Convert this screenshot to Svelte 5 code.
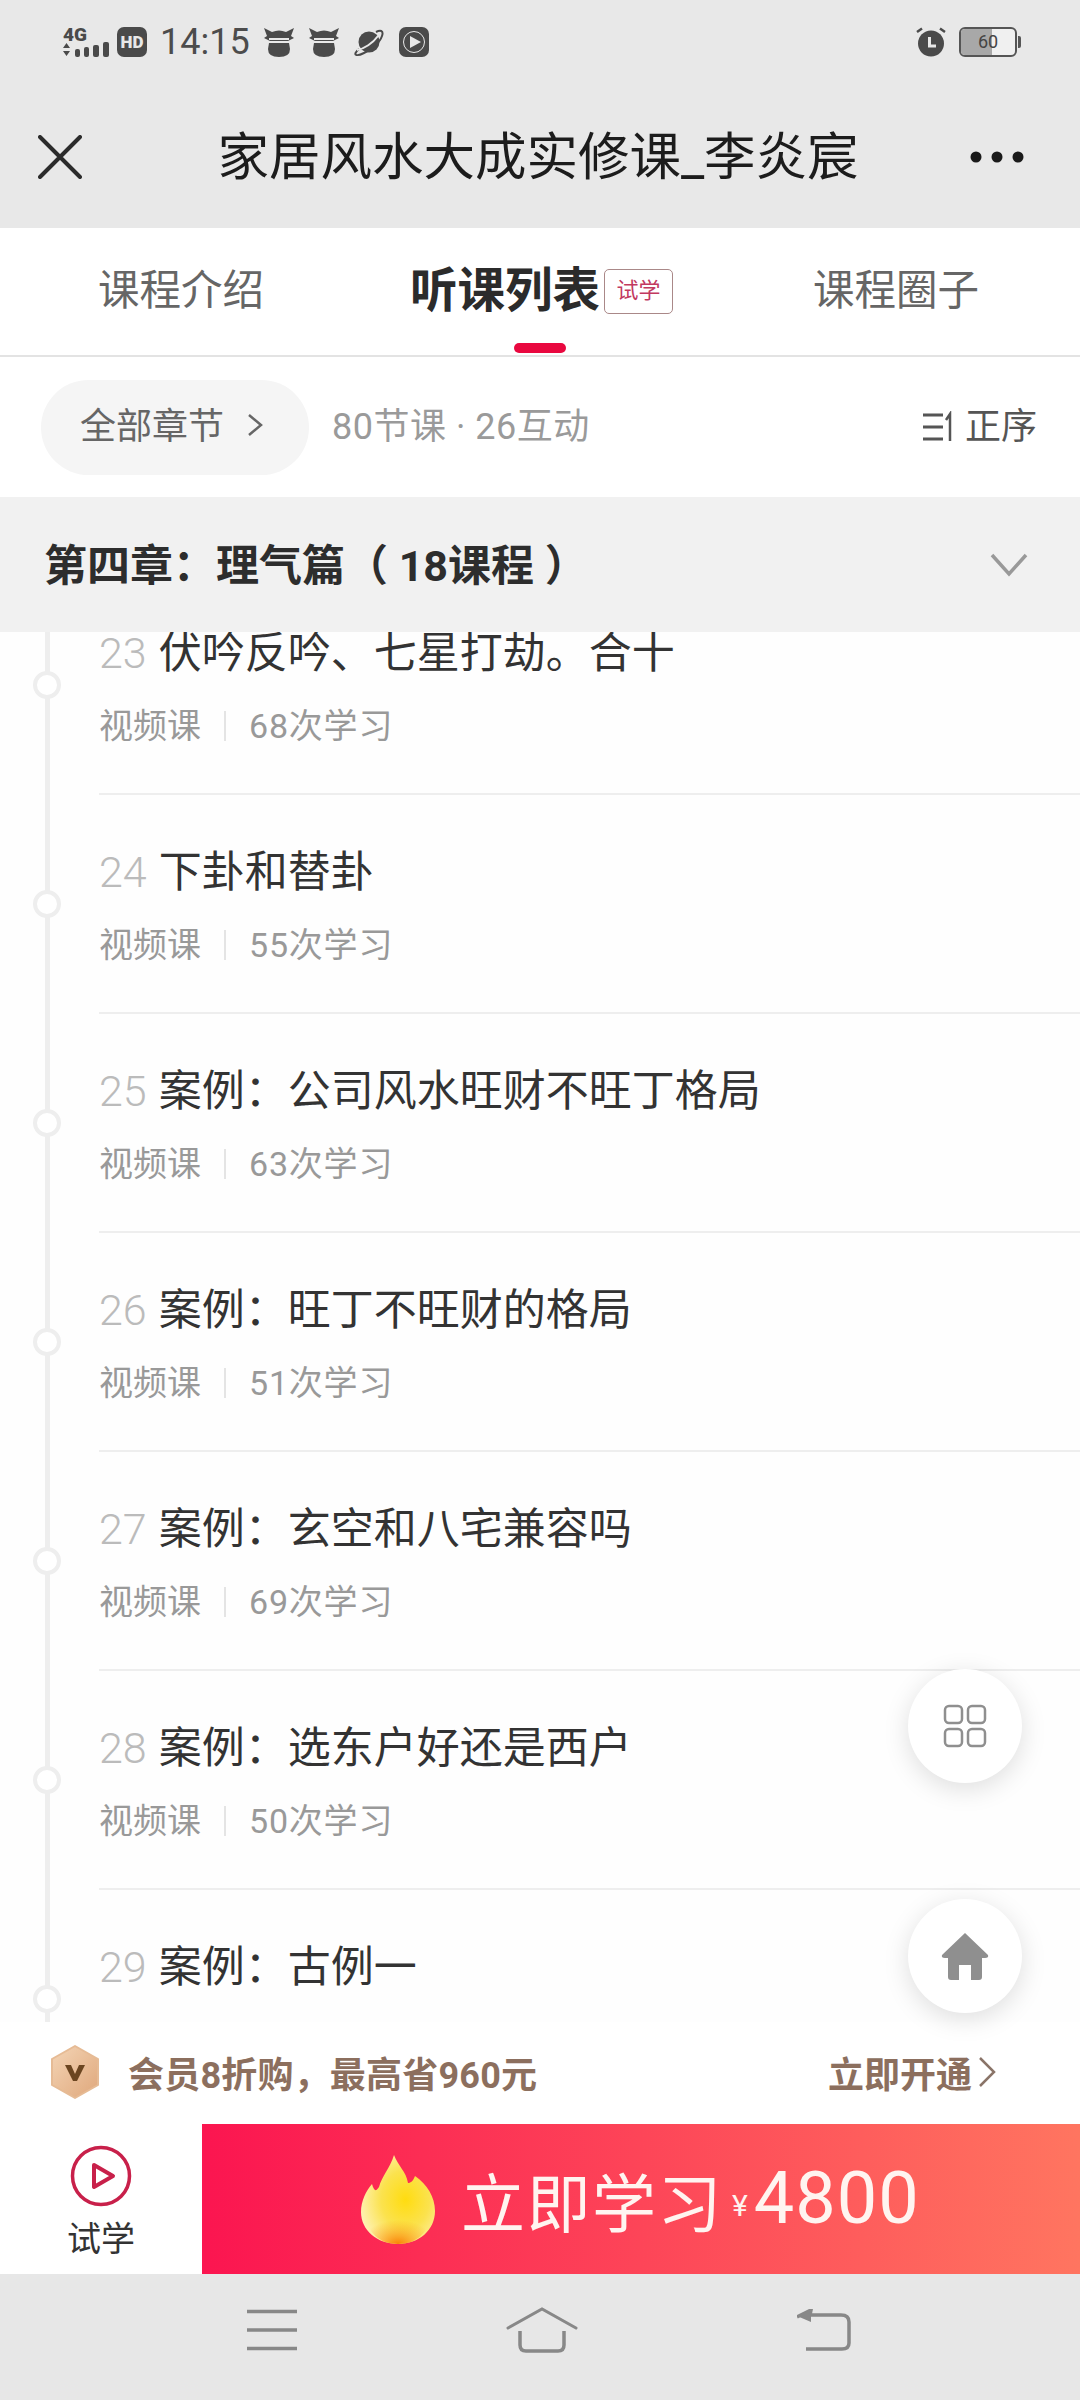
<script>
  const lessons = [
    { no: 23, title: '伏吟反吟、七星打劫。合十', count: 68 },
    { no: 24, title: '下卦和替卦', count: 55 },
    { no: 25, title: '案例：公司风水旺财不旺丁格局', count: 63 },
    { no: 26, title: '案例：旺丁不旺财的格局', count: 51 },
    { no: 27, title: '案例：玄空和八宅兼容吗', count: 69 },
    { no: 28, title: '案例：选东户好还是西户', count: 50 },
    { no: 29, title: '案例：古例一', count: 47 }
  ];
</script>

<div class="page">
  <!-- status bar -->
  <header class="top">
    <div class="status">
      <div class="status-left">
        <div class="net">
          <span class="net-label">4G</span>
          <svg class="net-bars" width="47" height="15" viewBox="0 0 47 15">
            <path d="M0 6 3.500 1 7 6ZM0 9H7L3.500 14Z" fill="#4a4a4a"/>
            <rect x="12" y="7" width="5" height="8" rx="2" fill="#4a4a4a"/>
            <rect x="21" y="5" width="5" height="10" rx="2" fill="#4a4a4a"/>
            <rect x="30" y="3" width="6" height="12" rx="2" fill="#4a4a4a"/>
            <rect x="40" y="0" width="6" height="15" rx="2" fill="#4a4a4a"/>
          </svg>
        </div>
        <span class="hd">HD</span>
        <span class="time">14:15</span>
        {#each [0, 1] as i}
          <svg class="bull" width="30" height="30" viewBox="0 0 30 30" data-i={i}>
            <path d="M0 1 8 5Q15 2 22 5L30 1 27 9 30 11 24 14H6L0 11 3 9Z" fill="#4a4a4a"/>
            <rect x="5" y="11" width="20" height="2" fill="#e8e8e8"/>
            <path d="M5 16H25L26 22Q26 30 15 30 4 30 4 22Z" fill="#4a4a4a"/>
          </svg>
        {/each}
        <svg class="planet" width="30" height="30" viewBox="0 0 30 30">
          <circle cx="15" cy="15" r="10.500" fill="#4a4a4a"/>
          <path d="M5 22C-2 28 2 30 10 26 18 23 26 15 28 9 30 3 26 3 22 5" fill="none" stroke="#4a4a4a" stroke-width="2"/>
          <path d="M3 23C10 22 19 16 24 9" fill="none" stroke="#e8e8e8" stroke-width="2"/>
        </svg>
        <svg class="play" width="30" height="30" viewBox="0 0 30 30">
          <rect width="30" height="30" rx="7" fill="#4a4a4a"/>
          <circle cx="15" cy="15" r="10.500" fill="none" stroke="#e8e8e8" stroke-width="1"/>
          <path d="M11 9 22 15 11 21Z" fill="#e8e8e8"/>
        </svg>
      </div>
      <div class="status-right">
        <svg width="30" height="30" viewBox="0 0 30 30">
          <circle cx="15" cy="16.500" r="13" fill="#4a4a4a"/>
          <path d="M13.500 10V19H20" fill="none" stroke="#e8e8e8" stroke-width="3"/>
          <path d="M1 5 6 1.500M29 5 24 1.500" stroke="#4a4a4a" stroke-width="2.500"/>
        </svg>
        <div class="battery"><span class="level"></span><span class="pct">60</span></div>
        <span class="tip"></span>
      </div>
    </div>
    <div class="titlebar">
      <svg width="44" height="44" viewBox="0 0 44 44">
        <path d="M2 2 42 42M42 2 2 42" stroke="#2b2b2b" stroke-width="4" stroke-linecap="round"/>
      </svg>
      <h1>家居风水大成实修课_李炎宸</h1>
      <svg width="54" height="12" viewBox="0 0 54 12">
        <circle cx="6" cy="6" r="5.500" fill="#1a1a1a"/>
        <circle cx="27" cy="6" r="5.500" fill="#1a1a1a"/>
        <circle cx="48" cy="6" r="5.500" fill="#1a1a1a"/>
      </svg>
    </div>
  </header>

  <!-- tabs -->
  <nav class="tabs">
    <span class="tab">课程介绍</span>
    <span class="tab active">
      <b>听课列表</b><em>试学</em>
      <i class="underline"></i>
    </span>
    <span class="tab">课程圈子</span>
  </nav>

  <!-- filter row -->
  <div class="filter">
    <div class="pill">
      全部章节
      <svg width="18" height="26" viewBox="0 0 18 26">
        <path d="M3 3 15 13 3 23" fill="none" stroke="#666" stroke-width="2.500"/>
      </svg>
    </div>
    <span class="summary">80节课 · 26互动</span>
    <div class="sort">
      <svg width="32" height="32" viewBox="0 0 32 32">
        <path d="M1 4H21M1 16H21M1 28H21" stroke="#555" stroke-width="3"/>
        <path d="M28 30V3L24 9" fill="none" stroke="#555" stroke-width="2.500"/>
      </svg>
      正序
    </div>
  </div>

  <!-- chapter -->
  <div class="chapter">
    <h2>第四章：理气篇（ 18课程 ）</h2>
    <svg width="38" height="26" viewBox="0 0 38 26">
      <path d="M2 3 19 22 36 3" fill="none" stroke="#999" stroke-width="3.500"/>
    </svg>
  </div>

  <!-- lessons, scrolled so the first row is cut off -->
  <div class="list">
    <div class="list-inner">
      {#each lessons as l}
        <div class="row">
          <div class="rail"><span class="dot"></span></div>
          <div class="body">
            <div class="name"><span class="no">{l.no}</span>{l.title}</div>
            <div class="meta">
              <span>视频课</span><i></i><span class="count">{l.count}次学习</span>
            </div>
          </div>
        </div>
      {/each}
    </div>
  </div>

  <!-- vip strip -->
  <div class="vip">
    <svg width="50" height="54" viewBox="0 0 50 54">
      <defs>
        <linearGradient id="hex" x1="0" y1="0" x2="1" y2="1">
          <stop offset="0" stop-color="#f4d5b6"/>
          <stop offset="1" stop-color="#dfa77b"/>
        </linearGradient>
      </defs>
      <path d="M25 1 48 14V40L25 53 2 40V14Z" fill="url(#hex)" stroke="#e6bb95" stroke-linejoin="round" stroke-width="2"/>
      <path d="M15 20H21L25 29 29 20H35L27 36H23Z" fill="#6b4520"/>
    </svg>
    <span class="vip-text">会员8折购，最高省960元</span>
    <span class="vip-link">立即开通
      <svg width="18" height="32" viewBox="0 0 18 32">
        <path d="M2 2 16 16 2 30" fill="none" stroke="#8a7468" stroke-width="2.500"/>
      </svg>
    </span>
  </div>

  <!-- cta -->
  <div class="cta">
    <div class="trial">
      <svg width="62" height="62" viewBox="0 0 62 62">
        <circle cx="31" cy="31" r="28.500" fill="none" stroke="#c8204a" stroke-width="3.500"/>
        <path d="M24 20 43 31 24 42Z" fill="none" stroke="#c8204a" stroke-width="4" stroke-linejoin="round"/>
      </svg>
      <span>试学</span>
    </div>
    <div class="buy">
      <svg width="74" height="90" viewBox="0 0 74 90">
        <defs>
          <radialGradient id="flame" cx="0.6" cy="0.5" r="0.65">
            <stop offset="0" stop-color="#ffdc10"/>
            <stop offset="0.5" stop-color="#fbe24e"/>
            <stop offset="1" stop-color="#fff3bc"/>
          </radialGradient>
          <radialGradient id="flameBase" cx="0.5" cy="1" r="0.6">
            <stop offset="0" stop-color="#f98204"/>
            <stop offset="1" stop-color="#fba50a" stop-opacity="0"/>
          </radialGradient>
        </defs>
        <path d="M33 1C37 12 45 17 47 29 50 29 52 27 54 22 66 30 74 43 74 57 74 76 58 90 37 90 16 90 0 76 0 58 0 47 5 37 11 30 13 37 15 38 18 33 21 22 29 14 33 1Z" fill="url(#flame)"/>
        <path d="M37 90C18 90 6 78 6 62 20 46 54 46 68 62 68 78 56 90 37 90Z" fill="url(#flameBase)"/>
      </svg>
      <span class="buy-label">立即学习</span>
      <span class="yen">¥</span>
      <span class="price">4800</span>
    </div>
  </div>

  <!-- system nav -->
  <footer class="sysnav">
    <svg width="52" height="42" viewBox="0 0 52 42">
      <path d="M1 2.500H51M1 21H51M1 39.500H51" stroke="#888" stroke-width="3.500"/>
    </svg>
    <svg class="nav-home" width="72" height="46" viewBox="0 0 72 46">
      <path d="M2 21 36 2 70 21" fill="none" stroke="#888" stroke-width="3" stroke-linecap="round"/>
      <path d="M14 24V38Q14 44 20 44H52Q58 44 58 38V24" fill="none" stroke="#888" stroke-width="3.500"/>
    </svg>
    <svg width="54" height="42" viewBox="0 0 54 42">
      <path d="M0 8 14 1 13 6H44Q52 6 52 13V34Q52 40 45 40H9" fill="none" stroke="#888" stroke-width="3.500"/>
      <path d="M0 7 14 0V13Z" fill="#888"/>
    </svg>
  </footer>

  <!-- floating buttons -->
  <button class="fab fab-grid" aria-label="菜单">
    <svg width="44" height="44" viewBox="0 0 44 44">
      <rect x="2" y="2" width="17" height="17" rx="4" fill="none" stroke="#8f8f8f" stroke-width="2.500"/>
      <rect x="25" y="2" width="17" height="17" rx="4" fill="none" stroke="#8f8f8f" stroke-width="2.500"/>
      <rect x="2" y="25" width="17" height="17" rx="4" fill="none" stroke="#8f8f8f" stroke-width="2.500"/>
      <rect x="25" y="25" width="17" height="17" rx="4" fill="none" stroke="#8f8f8f" stroke-width="2.500"/>
    </svg>
  </button>
  <button class="fab fab-home" aria-label="首页">
    <svg width="48" height="48" viewBox="0 0 48 48">
      <path d="M24 1 47 23Q48 26 44 26H41V45Q41 48 38 48H30V33H18V48H10Q7 48 7 45V26H4Q0 26 1 23Z" fill="#8f8f8f"/>
    </svg>
  </button>
</div>

<style>
  :global(body) {
    margin: 0;
    background: #fff;
  }

  .page {
    position: relative;
    width: 1080px;
    height: 2400px;
    display: flex;
    flex-direction: column;
    overflow: hidden;
    background: #fefefe;
    font-family: Roboto, "Noto Sans CJK SC", sans-serif;
    color: #222;
  }

  /* top */
  .top {
    height: 228px;
    flex: none;
    background: #e8e8e8;
  }

  .status {
    height: 84px;
    box-sizing: border-box;
    padding: 27px 59px 0 63px;
    display: flex;
    justify-content: space-between;
    align-items: flex-start;
  }

  .status-left,
  .status-right {
    display: flex;
    align-items: center;
    height: 30px;
  }

  .net {
    width: 47px;
    display: flex;
    flex-direction: column;
    margin-right: 7px;
  }

  .net-label {
    font-size: 19px;
    line-height: 15px;
    font-weight: 900;
    color: #4a4a4a;
  }

  .hd {
    width: 30px;
    height: 30px;
    border-radius: 7px;
    background: #4a4a4a;
    color: #e8e8e8;
    font-size: 17px;
    font-weight: 900;
    line-height: 30px;
    text-align: center;
  }

  .time {
    margin-left: 13px;
    font-size: 36px;
    line-height: 30px;
    color: #4c4c4c;
  }

  .bull { margin-left: 15px; }
  .bull:first-of-type { margin-left: 14px; }
  .planet,
  .play { margin-left: 15px; }

  .status-right svg { margin-right: 13px; }

  .battery {
    position: relative;
    width: 58px;
    height: 30px;
    border: 2.500px solid #555;
    border-radius: 6px;
    box-sizing: border-box;
    background: #f0f0f0;
    overflow: hidden;
  }

  .tip {
    width: 3px;
    height: 12px;
    margin-left: 1px;
    border-radius: 0 2px 2px 0;
    background: #555;
  }

  .level {
    display: block;
    width: 58%;
    height: 100%;
    background: #a8a8a8;
  }

  .pct {
    position: absolute;
    inset: 0;
    font-size: 18px;
    line-height: 25px;
    text-align: center;
    color: #444;
  }

  .titlebar {
    height: 144px;
    box-sizing: border-box;
    padding: 4px 56px 0 38px;
    display: flex;
    align-items: center;
    justify-content: space-between;
  }

  .titlebar svg { margin-top: -2px; }

  h1 {
    margin: 0 0 0 24px;
    font-size: 51.500px;
    font-weight: 400;
    color: #1c1c1c;
    line-height: 1;
  }

  /* tabs */
  .tabs {
    height: 129px;
    flex: none;
    box-sizing: border-box;
    border-bottom: 2px solid #e3e3e3;
    padding: 0 0 10px 98px;
    display: flex;
    align-items: center;
    background: #fff;
    font-size: 41.500px;
    color: #666;
  }

  .tab { white-space: nowrap; }

  .active {
    position: relative;
    margin: 0 140px 0 146px;
    display: flex;
    align-items: center;
    color: #2b2b2b;
  }

  .active b {
    font-size: 47.500px;
    font-weight: 700;
  }

  .active em {
    width: 69px;
    height: 45px;
    margin: 10px 0 0 4px;
    box-sizing: border-box;
    border: 1.500px solid #a88;
    border-radius: 5px;
    font-style: normal;
    font-size: 22px;
    line-height: 42px;
    text-align: center;
    color: #c2395f;
  }

  .underline {
    position: absolute;
    left: 104px;
    top: 91px;
    width: 52px;
    height: 10px;
    border-radius: 5px;
    background: #e9083f;
  }

  /* filter */
  .filter {
    height: 140px;
    flex: none;
    box-sizing: border-box;
    padding: 0 43px 0 41px;
    display: flex;
    align-items: center;
    font-size: 36px;
    background: #fff;
  }

  .pill {
    width: 268px;
    height: 95px;
    box-sizing: border-box;
    padding: 0 0 8px 39px;
    border-radius: 48px;
    background: #f5f5f5;
    display: flex;
    align-items: center;
    gap: 22px;
    color: #666;
  }

  .pill svg { margin-top: 4px; }

  .summary {
    margin: 0 0 8px 23px;
    letter-spacing: 0.500px;
    color: #9a9a9a;
  }

  .sort {
    margin-left: auto;
    padding-bottom: 8px;
    display: flex;
    align-items: center;
    gap: 11px;
    color: #555;
  }

  .sort svg { margin-top: 8px; }

  /* chapter */
  .chapter {
    height: 135px;
    flex: none;
    box-sizing: border-box;
    padding: 0 52px 6px 44px;
    display: flex;
    align-items: center;
    justify-content: space-between;
    background: #f1f1f1;
  }

  .chapter svg { margin-top: 6px; }

  h2 {
    margin: 0;
    font-size: 43px;
    font-weight: 700;
    color: #2d2d2d;
    white-space: nowrap;
  }

  /* list */
  .list {
    height: 1390px;
    flex: none;
    overflow: hidden;
  }

  .list-inner { margin-top: -56px; }

  .row {
    height: 219px;
    display: flex;
  }

  .rail {
    width: 99px;
    flex: none;
    background: linear-gradient(#eee, #eee) 45px 0 / 5px 100% no-repeat;
  }

  .dot {
    display: block;
    width: 28px;
    height: 28px;
    margin: 95px 0 0 33px;
    box-sizing: border-box;
    border: 4px solid #eee;
    border-radius: 50%;
    background: #fff;
  }

  .body {
    flex: 1;
    box-sizing: border-box;
    padding-top: 51px;
    border-bottom: 2px solid #eee;
  }

  .name {
    font-size: 43px;
    line-height: 52px;
    color: #333;
    white-space: nowrap;
  }

  .no {
    margin-right: 12px;
    color: #bbb;
    font-weight: 300;
  }

  .meta {
    margin-top: 25px;
    display: flex;
    align-items: center;
    font-size: 34px;
    line-height: 44px;
    color: #999;
  }

  .meta i {
    width: 2px;
    height: 30px;
    margin: 0 23px;
    background: #e4e4e4;
  }

  .count { letter-spacing: 0.800px; }

  /* vip strip */
  .vip {
    height: 102px;
    flex: none;
    box-sizing: border-box;
    padding: 0 84px 2px 50px;
    display: flex;
    align-items: center;
    background: #fff;
    font-size: 36px;
    font-weight: 700;
    color: #8c6f5e;
  }

  .vip-text {
    margin-left: 28px;
    letter-spacing: 0.200px;
  }

  .vip-link {
    margin-left: auto;
    display: flex;
    align-items: center;
    gap: 6px;
  }

  /* cta */
  .cta {
    height: 150px;
    flex: none;
    display: flex;
    background: #fff;
  }

  .trial {
    width: 202px;
    flex: none;
    box-sizing: border-box;
    padding-top: 21px;
    display: flex;
    flex-direction: column;
    align-items: center;
    font-size: 34px;
    line-height: 40px;
    color: #333;
  }

  .trial span { margin-top: 12px; }

  .buy {
    flex: 1;
    box-sizing: border-box;
    padding-left: 159px;
    display: flex;
    align-items: center;
    background: linear-gradient(90deg, #fb1550, #ff7560);
    color: #fff4f0;
  }

  .buy-label {
    margin-left: 26px;
    font-size: 64px;
    letter-spacing: 1.500px;
  }

  .yen {
    margin: 12px 6px 0 9px;
    font-size: 30px;
  }

  .price {
    font-size: 72px;
    line-height: 1;
    letter-spacing: 1px;
  }

  /* system nav */
  .sysnav {
    height: 126px;
    flex: none;
    box-sizing: border-box;
    padding: 0 229px 14px 246px;
    display: flex;
    align-items: center;
    justify-content: space-between;
    background: #e7e7e7;
  }

  .nav-home { margin-right: 12px; }

  /* floating */
  .fab {
    position: absolute;
    left: 908px;
    width: 114px;
    height: 114px;
    padding: 0;
    border: none;
    border-radius: 50%;
    background: #fff;
    box-shadow: 0 6px 26px rgba(0, 0, 0, 0.13);
    display: flex;
    align-items: center;
    justify-content: center;
  }

  .fab-grid { top: 1669px; }
  .fab-home { top: 1899px; }
</style>
